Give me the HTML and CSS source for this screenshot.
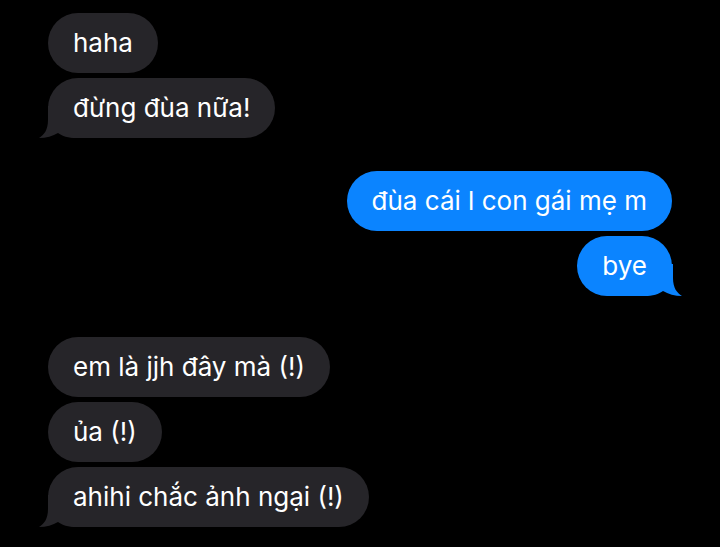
FILE: index.html
```html
<!DOCTYPE html>
<html lang="vi">
<head>
<meta charset="utf-8">
<link rel="stylesheet" href="styles.css">
</head>
<body>
<div class="thread">
  <div class="group in">
    <div class="bubble"><span class="txt">haha</span></div>
    <div class="bubble tail"><svg class="tip" viewBox="0 0 40 32" width="40" height="32"><path d="M9 0 V14 C9 24 5 29 0 32 C7 32 14 30 19 27 C23 30 29 32 38 32 H40 V0 Z"/></svg><span class="txt">đừng đùa nữa!</span></div>
  </div>
  <div class="group out g2">
    <div class="bubble"><span class="txt">đùa cái l con gái mẹ m</span></div>
    <div class="bubble tail"><svg class="tip" viewBox="0 0 40 32" width="40" height="32"><path d="M9 0 V14 C9 24 5 29 0 32 C7 32 14 30 19 27 C23 30 29 32 38 32 H40 V0 Z"/></svg><span class="txt">bye</span></div>
  </div>
  <div class="group in g3">
    <div class="bubble"><span class="txt">em là jjh đây mà (!)</span></div>
    <div class="bubble"><span class="txt">ủa (!)</span></div>
    <div class="bubble tail"><svg class="tip" viewBox="0 0 40 32" width="40" height="32"><path d="M9 0 V14 C9 24 5 29 0 32 C7 32 14 30 19 27 C23 30 29 32 38 32 H40 V0 Z"/></svg><span class="txt">ahihi chắc ảnh ngại (!)</span></div>
  </div>
</div>
</body>
</html>
```
FILE: styles.css
```css
html, body {
  margin: 0;
  background: #000;
}
body {
  width: 720px;
  height: 547px;
  overflow: hidden;
  font-family: Inter, "Noto Sans", sans-serif;
}
.thread {
  display: flex;
  flex-direction: column;
  padding: 13px 48px 0;
}
.group {
  display: flex;
  flex-direction: column;
  gap: 5px;
}
.group.in { align-items: flex-start; }
.group.out { align-items: flex-end; }
.g2 { margin-top: 33px; }
.g3 { margin-top: 41px; }
.bubble {
  position: relative;
  height: 60px;
  line-height: 60px;
  padding: 0 25px;
  border-radius: 30px;
  font-size: 26px;
  color: #fff;
  white-space: nowrap;
}
.txt {
  position: relative;
  z-index: 1;
}
.in .bubble { background: #262529; }
.out .bubble { background: #0b84ff; }
.tip {
  position: absolute;
  bottom: 0;
  left: -9px;
  display: block;
  z-index: 0;
}
.in .tip { fill: #262529; }
.out .tip {
  fill: #0b84ff;
  left: auto;
  right: -10px;
  transform: scaleX(-1);
}
```
